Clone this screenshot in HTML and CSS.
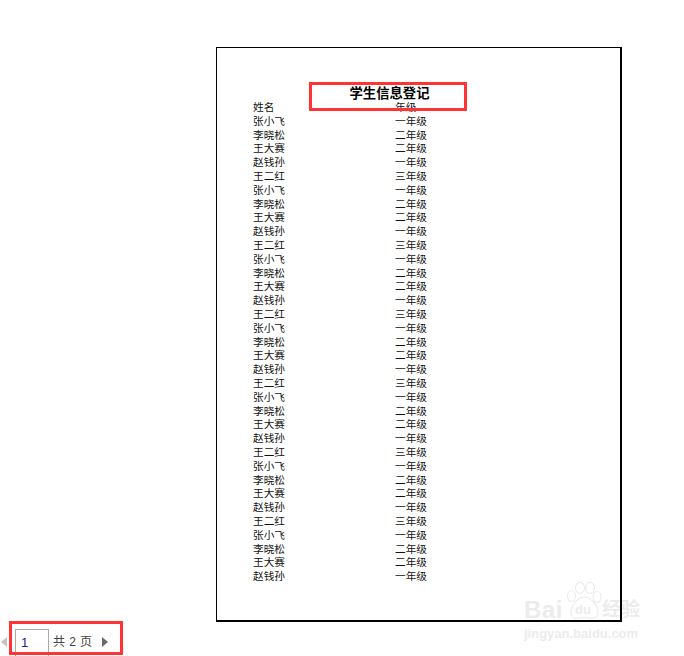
FILE: index.html
```html
<!DOCTYPE html>
<html lang="zh-CN">
<head>
<meta charset="utf-8">
<title>学生信息登记</title>
<link rel="stylesheet" href="styles.css">
</head>
<body>
<main class="stage">
  <section class="sheet">
    <h1 class="title">学生信息登记</h1>
    <div class="callout callout-title"></div>
    <div class="rows">
      <div class="row"><span>姓名</span><span>年级</span></div>
      <div class="row"><span>张小飞</span><span>一年级</span></div>
      <div class="row"><span>李晓松</span><span>二年级</span></div>
      <div class="row"><span>王大赛</span><span>二年级</span></div>
      <div class="row"><span>赵钱孙</span><span>一年级</span></div>
      <div class="row"><span>王二红</span><span>三年级</span></div>
      <div class="row"><span>张小飞</span><span>一年级</span></div>
      <div class="row"><span>李晓松</span><span>二年级</span></div>
      <div class="row"><span>王大赛</span><span>二年级</span></div>
      <div class="row"><span>赵钱孙</span><span>一年级</span></div>
      <div class="row"><span>王二红</span><span>三年级</span></div>
      <div class="row"><span>张小飞</span><span>一年级</span></div>
      <div class="row"><span>李晓松</span><span>二年级</span></div>
      <div class="row"><span>王大赛</span><span>二年级</span></div>
      <div class="row"><span>赵钱孙</span><span>一年级</span></div>
      <div class="row"><span>王二红</span><span>三年级</span></div>
      <div class="row"><span>张小飞</span><span>一年级</span></div>
      <div class="row"><span>李晓松</span><span>二年级</span></div>
      <div class="row"><span>王大赛</span><span>二年级</span></div>
      <div class="row"><span>赵钱孙</span><span>一年级</span></div>
      <div class="row"><span>王二红</span><span>三年级</span></div>
      <div class="row"><span>张小飞</span><span>一年级</span></div>
      <div class="row"><span>李晓松</span><span>二年级</span></div>
      <div class="row"><span>王大赛</span><span>二年级</span></div>
      <div class="row"><span>赵钱孙</span><span>一年级</span></div>
      <div class="row"><span>王二红</span><span>三年级</span></div>
      <div class="row"><span>张小飞</span><span>一年级</span></div>
      <div class="row"><span>李晓松</span><span>二年级</span></div>
      <div class="row"><span>王大赛</span><span>二年级</span></div>
      <div class="row"><span>赵钱孙</span><span>一年级</span></div>
      <div class="row"><span>王二红</span><span>三年级</span></div>
      <div class="row"><span>张小飞</span><span>一年级</span></div>
      <div class="row"><span>李晓松</span><span>二年级</span></div>
      <div class="row"><span>王大赛</span><span>二年级</span></div>
      <div class="row"><span>赵钱孙</span><span>一年级</span></div>
    </div>
  </section>
</main>
<footer class="pager">
  <span class="arrow arrow-prev"></span>
  <span class="page-input">1</span>
  <span class="page-total">共 2 页</span>
  <span class="arrow arrow-next"></span>
  <div class="callout callout-pager"></div>
</footer>
<div class="watermark">
  <div class="wm-logo">
    <span class="wm-bai">Bai</span>
    <svg class="wm-paw" viewBox="0 0 36 40" width="36" height="40">
      <g fill="none" stroke="#ececec" stroke-width="1.2">
        <ellipse cx="5.5" cy="14" rx="4" ry="5.5"/>
        <ellipse cx="14" cy="6" rx="4.5" ry="5.5"/>
        <ellipse cx="24" cy="6" rx="4.5" ry="5.5"/>
        <ellipse cx="31" cy="15" rx="4" ry="5.5"/>
        <path d="M18 15C11 15 4 26 5 32C6 37 12 37 18 35C24 37 31 37 32 31C33 25 25 15 18 15Z"/>
      </g>
      <text x="9" y="32" class="wm-du">du</text>
    </svg>
    <span class="wm-jy">经验</span>
  </div>
  <div class="wm-url">jingyan.baidu.com</div>
</div>
</body>
</html>
```
FILE: styles.css
```css
html, body {
  margin: 0;
  padding: 0;
  background: #fff;
}
body {
  width: 684px;
  height: 656px;
  position: relative;
  overflow: hidden;
  font-family: "Liberation Sans", "Noto Sans CJK SC", sans-serif;
}
.stage {
  padding: 47px 0 0 216px;
  height: 575px;
}
.sheet {
  position: relative;
  z-index: 1;
  box-sizing: border-box;
  width: 406px;
  height: 575px;
  border-style: solid;
  border-color: #000;
  border-width: 1px 2px 2px 1px;
  padding: 38px 0 0 36px;
  color: #111;
}
.title {
  margin: 0;
  width: 273px;
  height: 15px;
  font-size: 13.33px;
  line-height: 15px;
  font-weight: 700;
  text-align: center;
  color: #000;
}
.rows {
  font-size: 10.67px;
  line-height: 13.8px;
}
.row {
  display: grid;
  grid-template-columns: 142px auto;
  height: 13.8px;
}
.callout {
  position: absolute;
  box-sizing: border-box;
  border: 3px solid #ff3333;
}
.callout-title {
  left: 92px;
  top: 34px;
  width: 158px;
  height: 29px;
}
.pager {
  position: relative;
  display: flex;
  align-items: center;
  height: 34px;
  font-size: 12px;
  color: #444;
}
.arrow {
  width: 0;
  height: 0;
  border-style: solid;
  border-color: transparent;
  border-width: 5px 0 5px 0;
  margin-top: 6px;
}
.arrow-prev {
  margin-left: 1px;
  border-right: 6px solid #c4c4c4;
}
.arrow-next {
  margin-left: 9px;
  border-left: 6px solid #6a6a6a;
}
.page-input {
  box-sizing: border-box;
  align-self: flex-start;
  margin: 7px 0 0 8px;
  width: 34px;
  height: 30px;
  padding: 4px 0 0 5px;
  border: 1px solid #aaa;
  border-bottom: 0;
  font-size: 13px;
  line-height: 17px;
  color: #1a1a9c;
}
.page-total {
  margin: 6px 0 0 4px;
  line-height: 16px;
  width: 40px;
  white-space: nowrap;
  letter-spacing: 0.4px;
}
.callout-pager {
  left: 9px;
  top: -1px;
  width: 114px;
  height: 34px;
}
.watermark {
  position: absolute;
  z-index: 0;
  left: 524px;
  top: 582px;
  width: 122px;
  color: #ececec;
}
.wm-logo {
  display: flex;
  align-items: flex-end;
  height: 40px;
}
.wm-bai {
  font-size: 24px;
  font-weight: 700;
  line-height: 24px;
  width: 42px;
  letter-spacing: 0.5px;
}
.wm-paw {
  margin: -2px 0 0 0;
  flex: none;
}
.wm-jy {
  font-size: 19px;
  font-weight: 700;
  line-height: 24px;
  white-space: nowrap;
}
.wm-du {
  font-size: 13px;
  font-weight: 700;
  fill: #ececec;
  font-family: "Liberation Sans", sans-serif;
}
.wm-url {
  font-size: 13px;
  line-height: 18px;
  font-weight: 700;
  margin-top: 3px;
  white-space: nowrap;
}
```
